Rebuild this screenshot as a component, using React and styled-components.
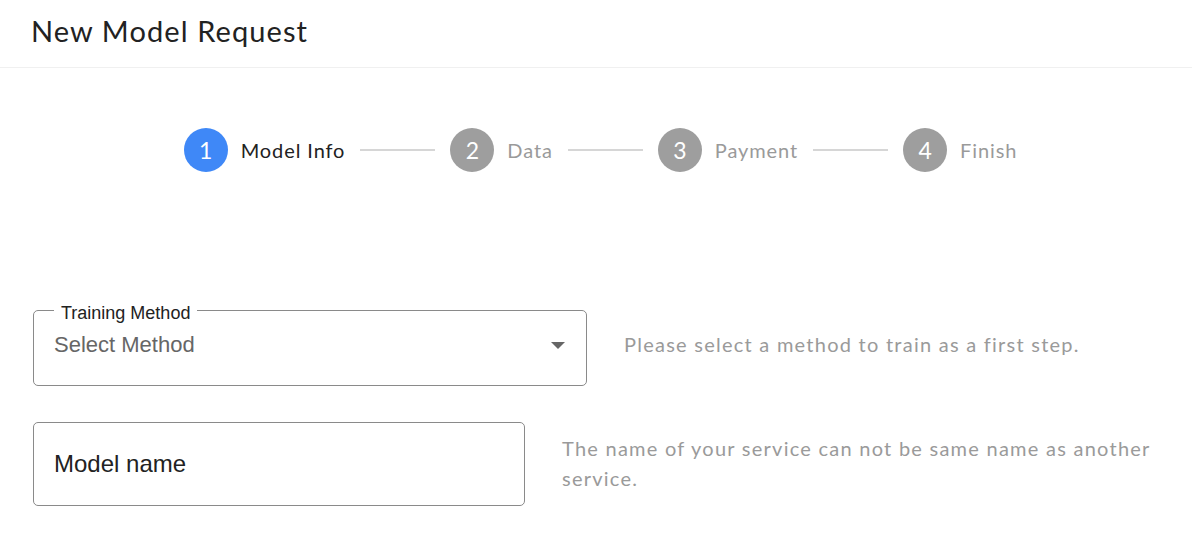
import { Fragment } from "react";
import styled, { createGlobalStyle } from "styled-components";

const GlobalStyle = createGlobalStyle`
  body {
    margin: 0;
    background: #fff;
    font-family: Lato, "Noto Sans", sans-serif;
  }
`;

const Header = styled.header`
  height: 68px;
  box-sizing: border-box;
  border-bottom: 1px solid #f0f0f0;
  padding: 13px 0 0 31px;
  h1 {
    margin: 0;
    font-weight: 400;
    font-size: 29px;
    letter-spacing: 1.1px;
    color: #222;
  }
`;

const Stepper = styled.ol`
  display: flex;
  align-items: center;
  justify-content: center;
  list-style: none;
  margin: 60px 0 0;
  padding: 0 0 0 9px;
`;

const Step = styled.li`
  display: flex;
  align-items: center;
  gap: 13px;
  font-size: 20px;
  letter-spacing: 0.9px;
  color: ${(p) => (p.$active ? "#222" : "#9a9a9a")};
  .num {
    width: 44px;
    height: 44px;
    border-radius: 50%;
    display: flex;
    align-items: center;
    justify-content: center;
    color: #fff;
    font-size: 23px;
    letter-spacing: 0;
    background: ${(p) => (p.$active ? "#3f88f7" : "#9e9e9e")};
  }
`;

const Connector = styled.li`
  width: 75px;
  height: 2px;
  background: #d6d6d6;
  margin: 0 15px;
`;

const Form = styled.div`
  display: flex;
  flex-direction: column;
  gap: 36px;
  padding: 138px 30px 0 33px;
`;

const Row = styled.div`
  display: flex;
  align-items: center;
`;

const Field = styled.div`
  position: relative;
  flex: none;
  box-sizing: border-box;
  width: ${(p) => p.$width}px;
  height: ${(p) => p.$height}px;
  padding: 0 20px;
  border: 1px solid #8a8a8a;
  border-radius: 5px;
  font-family: "Liberation Sans", Arial, sans-serif;
  display: flex;
  align-items: center;
`;

const FloatLabel = styled.label`
  position: absolute;
  top: -9px;
  left: 20px;
  padding: 0 7px;
  background: #fff;
  font-size: 18px;
  line-height: 22px;
  color: #222;
`;

const Value = styled.span`
  flex: 1;
  font-size: ${(p) => (p.$placeholder ? 22 : 24)}px;
  color: ${(p) => (p.$placeholder ? "#666" : "#222")};
  margin-top: ${(p) => p.$offset || 0}px;
`;

const Caret = styled.span`
  width: 0;
  height: 0;
  border-left: 7px solid transparent;
  border-right: 7px solid transparent;
  border-top: 7px solid #666;
  margin: -6px 1px 0 0;
`;

const Help = styled.p`
  margin: 0 0 0 37px;
  font-size: 20px;
  line-height: 30px;
  letter-spacing: 1.25px;
  color: #9a9a9a;
  margin-top: ${(p) => p.$offset || 0}px;
`;

const steps = ["Model Info", "Data", "Payment", "Finish"];

export default function App() {
  return (
    <>
      <GlobalStyle />
      <Header>
        <h1>New Model Request</h1>
      </Header>
      <Stepper>
        {steps.map((s, i) => (
          <Fragment key={s}>
            {i > 0 && <Connector />}
            <Step $active={i === 0}>
              <span className="num">{i + 1}</span>
              <span>{s}</span>
            </Step>
          </Fragment>
        ))}
      </Stepper>
      <Form>
        <Row>
          <Field $width={554} $height={76}>
            <FloatLabel>Training Method</FloatLabel>
            <Value $placeholder $offset={-6}>Select Method</Value>
            <Caret />
          </Field>
          <Help $offset={-9}>Please select a method to train as a first step.</Help>
        </Row>
        <Row>
          <Field $width={492} $height={84}>
            <Value>Model name</Value>
          </Field>
          <Help $offset={-2}>
            The name of your service can not be same name as another service.
          </Help>
        </Row>
      </Form>
    </>
  );
}
